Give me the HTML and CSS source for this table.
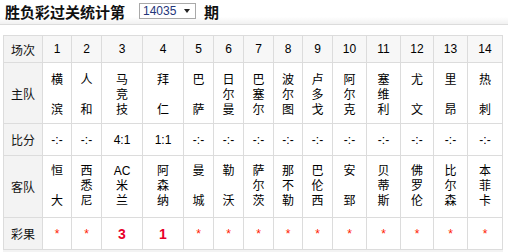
FILE: index.html
```html
<!DOCTYPE html>
<html lang="zh-CN">
<head>
<meta charset="utf-8">
<title>胜负彩过关统计</title>
<link rel="stylesheet" href="styles.css">
</head>
<body>
<div class="top">
  <span class="title">胜负彩过关统计第</span>
  <div class="sel"><span class="val">14035</span><span class="arr"></span></div>
  <span class="title">期</span>
</div>
<table class="grid">
  <colgroup>
    <col class="w39"><col class="w29"><col class="w30"><col class="w41"><col class="w41"><col class="w30"><col class="w30"><col class="w30"><col class="w29"><col class="w30"><col class="w34"><col class="w34"><col class="w33"><col class="w34"><col class="w35">
  </colgroup>
  <tr class="r-head">
    <th class="lbl">场次</th><th>1</th><th>2</th><th>3</th><th>4</th><th>5</th><th>6</th><th>7</th><th>8</th><th>9</th><th>10</th><th>11</th><th>12</th><th>13</th><th>14</th>
  </tr>
  <tr class="r-team">
    <th class="lbl">主队</th>
    <td>横<br><br>滨</td><td>人<br><br>和</td><td>马<br>竞<br>技</td><td>拜<br><br>仁</td><td>巴<br><br>萨</td><td>日<br>尔<br>曼</td><td>巴<br>塞<br>尔</td><td>波<br>尔<br>图</td><td>卢<br>多<br>戈</td><td>阿<br>尔<br>克</td><td>塞<br>维<br>利</td><td>尤<br><br>文</td><td>里<br><br>昂</td><td>热<br><br>刺</td>
  </tr>
  <tr class="r-score">
    <th class="lbl">比分</th>
    <td>-:-</td><td>-:-</td><td>4:1</td><td>1:1</td><td>-:-</td><td>-:-</td><td>-:-</td><td>-:-</td><td>-:-</td><td>-:-</td><td>-:-</td><td>-:-</td><td>-:-</td><td>-:-</td>
  </tr>
  <tr class="r-team r-away">
    <th class="lbl">客队</th>
    <td>恒<br><br>大</td><td>西<br>悉<br>尼</td><td>AC<br>米<br>兰</td><td>阿<br>森<br>纳</td><td>曼<br><br>城</td><td>勒<br><br>沃</td><td>萨<br>尔<br>茨</td><td>那<br>不<br>勒</td><td>巴<br>伦<br>西</td><td>安<br><br>郅</td><td>贝<br>蒂<br>斯</td><td>佛<br>罗<br>伦</td><td>比<br>尔<br>森</td><td>本<br>菲<br>卡</td>
  </tr>
  <tr class="r-res">
    <th class="lbl">彩果</th>
    <td><span class="star">*</span></td><td><span class="star">*</span></td><td><span class="num">3</span></td><td><span class="num">1</span></td><td><span class="star">*</span></td><td><span class="star">*</span></td><td><span class="star">*</span></td><td><span class="star">*</span></td><td><span class="star">*</span></td><td><span class="star">*</span></td><td><span class="star">*</span></td><td><span class="star">*</span></td><td><span class="star">*</span></td><td><span class="star">*</span></td>
  </tr>
</table>
<div class="foot"></div>
</body>
</html>
```
FILE: styles.css
```css
html, body {
  margin: 0;
  padding: 0;
  background: #fff;
}
body {
  font-family: "Liberation Sans", "Noto Sans CJK SC", sans-serif;
  font-size: 12px;
  color: #000;
}
.top {
  height: 24px;
  border-bottom: 1px solid #dcdcdc;
  background: linear-gradient(#fff 0%, #fff 70%, #f1f1f1 100%);
  display: flex;
  align-items: center;
  padding-left: 5px;
}
.title {
  font-family: "Noto Sans CJK SC", sans-serif;
  font-weight: bold;
  font-size: 15px;
  line-height: 18px;
  color: #111;
}
.sel {
  margin-left: 14px;
  margin-right: 8px;
  width: 52px;
  height: 14px;
  border: 1px solid #a9a9a9;
  background: #fff;
  display: flex;
  align-items: center;
  padding-left: 3px;
  box-sizing: content-box;
  margin-top: -3px;
}
.val {
  font-size: 12px;
  line-height: 14px;
  color: #23357a;
}
.arr {
  margin-left: 8px;
  width: 0;
  height: 0;
  border-left: 3px solid transparent;
  border-right: 3px solid transparent;
  border-top: 4px solid #222;
}
.grid {
  margin: 10px 0 0 3px;
  border-collapse: collapse;
  table-layout: fixed;
  width: 500px;
}
.w29 { width: 29px; }
.w30 { width: 30px; }
.w33 { width: 33px; }
.w34 { width: 34px; }
.w35 { width: 35px; }
.w39 { width: 39px; }
.w41 { width: 41px; }
.grid th, .grid td {
  border: 1px solid #dcdcdc;
  padding: 0;
  text-align: center;
  vertical-align: middle;
  font-weight: normal;
}
.grid .lbl {
  background: #f3f3f3;
  font-family: "Noto Sans CJK SC", sans-serif;
  font-size: 12px;
  color: #111;
}
.r-head th {
  background: #f7f7f7;
  height: 26px;
  font-size: 12px;
}
.r-team td {
  height: 60px;
  line-height: 15px;
  font-family: "Noto Sans CJK SC", sans-serif;
  font-size: 12px;
}
.r-away td {
  height: 61px;
  font-family: "Liberation Sans", "Noto Sans CJK SC", sans-serif;
}
.r-score td, .r-score th {
  height: 31px;
}
.r-res td, .r-res th {
  height: 31px;
}
.star {
  color: #ff1a00;
  font-size: 12px;
}
.num {
  color: #e8002a;
  font-weight: bold;
  font-size: 14px;
}
.foot {
  margin-left: 3px;
  width: 500px;
  height: 6px;
  background: #f3f3f3;
}
```
